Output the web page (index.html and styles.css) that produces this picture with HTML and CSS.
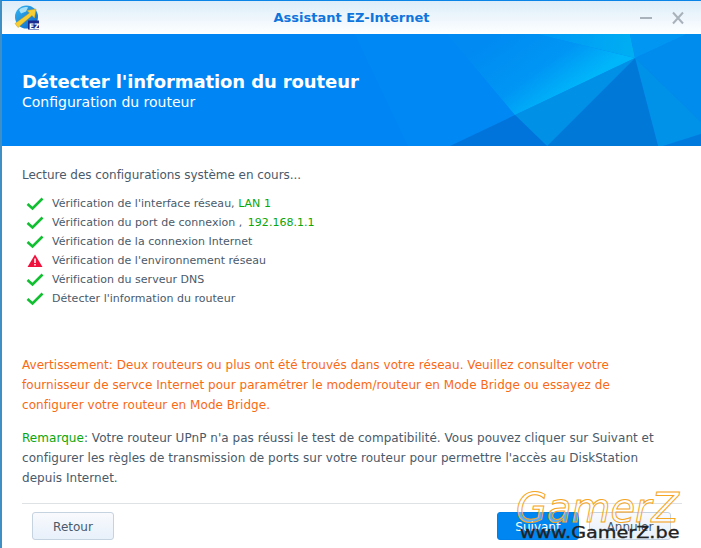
FILE: index.html
```html
<!DOCTYPE html>
<html>
<head>
    <title>Assistant EZ-Internet</title>
    <link rel="stylesheet" href="styles.css">
</head>
<body>
    <div class="window">
        <div class="titlebar">
            <svg class="app-icon" width="25" height="25" viewBox="0 0 25 25">
                <defs>
                    <linearGradient id="globe" x1="0" y1="0" x2="1" y2="1">
                        <stop offset="0" stop-color="#35b8f0"/>
                        <stop offset="1" stop-color="#0b62c8"/>
                    </linearGradient>
                </defs>
                <circle cx="12.500" cy="12" r="11.500" fill="url(#globe)"/>
                <path d="M5 5c3-3 7-3.500 9-2.500l-2 4-5 2z" fill="#a5e0f6"/>
                <path d="M1 18.500L15.500 8 13 5.500 22 4l-1.500 9-2.500-2.500L4 22.500z" fill="#f7cf35" stroke="#c99a12" stroke-width=".5"/>
                <rect x="14" y="15.500" width="11" height="9" fill="#1b2a8c"/>
                <text x="15" y="23.500" class="app-icon-text">EZ</text>
            </svg>
            <div class="title">Assistant EZ-Internet</div>
            <div class="controls">
                <svg width="14" height="14" viewBox="0 0 14 14"><path d="M1 7h12" stroke="#a9b2ba" stroke-width="2"/></svg>
                <svg width="14" height="14" viewBox="0 0 14 14"><path d="M2 1.500l10 11M12 1.500l-10 11" stroke="#a9b2ba" stroke-width="2"/></svg>
            </div>
        </div>

        <div class="banner">
            <svg class="banner-art" width="701" height="112" viewBox="0 0 701 112">
                <defs>
                    <linearGradient id="glow" gradientUnits="userSpaceOnUse" x1="480" y1="10" x2="535" y2="85">
                        <stop offset="0" stop-color="#008af2"/>
                        <stop offset=".6" stop-color="#0096f4"/>
                        <stop offset="1" stop-color="#00b6fa"/>
                    </linearGradient>
                    <linearGradient id="peak" gradientUnits="userSpaceOnUse" x1="540" y1="0" x2="632" y2="24">
                        <stop offset="0" stop-color="#0098f6"/>
                        <stop offset="1" stop-color="#00aef2"/>
                    </linearGradient>
                </defs>
                <polygon points="355,0 447,0 515,81 450,112 408,112" fill="#0089f4"/>
                <polygon points="447,0 537,0 635,24 515,81" fill="url(#glow)"/>
                <polygon points="537,0 630,0 635,24" fill="url(#peak)"/>
                <polygon points="630,0 687,0 635,24" fill="#0096f2"/>
                <polygon points="687,0 701,0 701,88 635,24" fill="#008cec"/>
                <polygon points="635,24 701,88 701,100 663,112 658,112" fill="#0091e8"/>
                <polygon points="635,24 658,112 547,112" fill="#0078d8"/>
                <polygon points="635,24 547,112 515,81" fill="#0090e6"/>
                <polygon points="515,81 547,112 450,112" fill="#0074da"/>
                <polygon points="701,100 701,112 663,112" fill="#007adc"/>
            </svg>
            <h1 class="banner-title">Détecter l'information du routeur</h1>
            <div class="banner-sub">Configuration du routeur</div>
        </div>

        <div class="content">
            <p class="intro">Lecture des configurations système en cours...</p>
            <ul class="checks">
                <li><svg class="ok" viewBox="0 0 18 14"><path d="M1.500 7l5 4.500L16.500 1.500"/></svg>Vérification de l'interface réseau, <span class="green">LAN 1</span></li>
                <li><svg class="ok" viewBox="0 0 18 14"><path d="M1.500 7l5 4.500L16.500 1.500"/></svg>Vérification du port de connexion , <span class="green ip">192.168.1.1</span></li>
                <li><svg class="ok" viewBox="0 0 18 14"><path d="M1.500 7l5 4.500L16.500 1.500"/></svg>Vérification de la connexion Internet</li>
                <li><svg class="warn" viewBox="0 0 18 14"><path d="M9 0.500L16.500 13H1.500z" fill="#f0103c"/><path d="M9 4.500v4.500M9 10v1.500" stroke="#fff" stroke-width="1.500"/></svg>Vérification de l'environnement réseau</li>
                <li><svg class="ok" viewBox="0 0 18 14"><path d="M1.500 7l5 4.500L16.500 1.500"/></svg>Vérification du serveur DNS</li>
                <li><svg class="ok" viewBox="0 0 18 14"><path d="M1.500 7l5 4.500L16.500 1.500"/></svg>Détecter l'information du routeur</li>
            </ul>
            <p class="warning">Avertissement: Deux routeurs ou plus ont été trouvés dans votre réseau. Veuillez consulter votre<br>fournisseur de servce Internet pour paramétrer le modem/routeur en Mode Bridge ou essayez de<br>configurer votre routeur en Mode Bridge.</p>
            <p class="note"><span class="green">Remarque</span>: Votre routeur UPnP n'a pas réussi le test de compatibilité. Vous pouvez cliquer sur Suivant et<br>configurer les règles de transmission de ports sur votre routeur pour permettre l'accès au DiskStation<br>depuis Internet.</p>
        </div>

        <div class="footer">
            <button class="btn">Retour</button>
            <div class="footer-right">
                <button class="btn btn-primary">Suivant</button>
                <button class="btn">Annuler</button>
            </div>
        </div>
    </div>

    <div class="watermark">
        <div class="wm-logo">GamerZ</div>
        <div class="wm-url">www.GamerZ.be</div>
    </div>
</body>
</html>
```

FILE: styles.css
```css
html, body { margin: 0; padding: 0; }
body { width: 701px; height: 548px; overflow: hidden; background: #fff; font-family: "DejaVu Sans", Verdana, sans-serif; }
.window {
    height: 547px;
    border-top: 1px solid #0a84e6;
    border-left: 2px solid #3f8fc4;
    display: flex;
    flex-direction: column;
    color: #4a5a6a;
    font-size: 11px;
}
.titlebar {
    height: 33px;
    display: flex;
    align-items: center;
    position: relative;
    background: linear-gradient(#dcedf9, #fff);
    flex-shrink: 0;
}
.app-icon { margin-left: 12px; }
.app-icon-text { font-size: 7.500px; font-weight: bold; fill: #fff; }
.title {
    position: absolute;
    left: 0;
    right: 0;
    text-align: center;
    color: #0f75dd;
    font-size: 13px;
    font-weight: bold;
}
.controls { margin-left: auto; margin-right: 16px; display: flex; gap: 18px; }
.banner {
    height: 112px;
    background: #0086f4;
    position: relative;
    padding-left: 20px;
    color: #fff;
    flex-shrink: 0;
    box-sizing: border-box;
    padding-top: 36px;
}
.banner-art { position: absolute; left: -2px; top: 0; }
.banner-title { position: relative; margin: 0; font-size: 18px; font-weight: bold; line-height: 24px; letter-spacing: -.1px; }
.banner-sub { position: relative; font-size: 14px; line-height: 16px; }
.content { flex: 1; padding: 21px 20px 0; }
.intro { margin: 0 0 11px; font-size: 12px; line-height: 16px; letter-spacing: -.04px; }
.checks { list-style: none; margin: 0; padding: 0; }
.checks li { display: flex; align-items: center; height: 19px; white-space: pre; letter-spacing: .02px; }
.checks svg { width: 18px; height: 14px; margin-left: 4px; margin-right: 8px; flex-shrink: 0; }
.ok path { fill: none; stroke: #10c030; stroke-width: 2.600; }
.green { color: #0ba60b; }
.ip { margin-left: 2px; }
.warning { margin: 47px 0 0; color: #f96a14; font-size: 12px; line-height: 20px; white-space: nowrap; letter-spacing: .04px; }
.note { margin: 13px 0 0; font-size: 12px; line-height: 20px; white-space: nowrap; letter-spacing: .04px; }
.footer {
    margin: 0 19px 0 20px;
    border-top: 1px solid #dfe2e5;
    height: 45px;
    padding: 8px 11px 0 10px;
    display: flex;
    justify-content: space-between;
    align-items: flex-start;
    flex-shrink: 0;
    box-sizing: border-box;
}
.footer-right { display: flex; gap: 10px; }
.btn {
    width: 82px;
    height: 28px;
    border: 1px solid #c5d2e0;
    border-radius: 3px;
    background: linear-gradient(#f8fafd, #e8f0fa);
    color: #4a5a6a;
    font-family: inherit;
    font-size: 12px;
    padding: 2px 0 0;
}
.btn-primary { background: #0086f0; border-color: #0080e8; color: #fff; }
.watermark { position: absolute; left: 516px; top: 485px; width: 166px; }
.wm-logo {
    font-family: "DejaVu Sans", sans-serif;
    font-style: italic;
    font-size: 40px;
    line-height: 46px;
    color: rgba(255,255,255,.35);
    -webkit-text-stroke: 1px #f5a623;
    white-space: nowrap;
}
.wm-url {
    margin-top: -7px;
    font-size: 15px;
    color: #222;
    -webkit-text-stroke: .3px #222;
    white-space: nowrap;
    line-height: 18px;
    text-align: right;
    padding-right: 2px;
    transform: scaleX(1.280);
    transform-origin: right;
}
```
